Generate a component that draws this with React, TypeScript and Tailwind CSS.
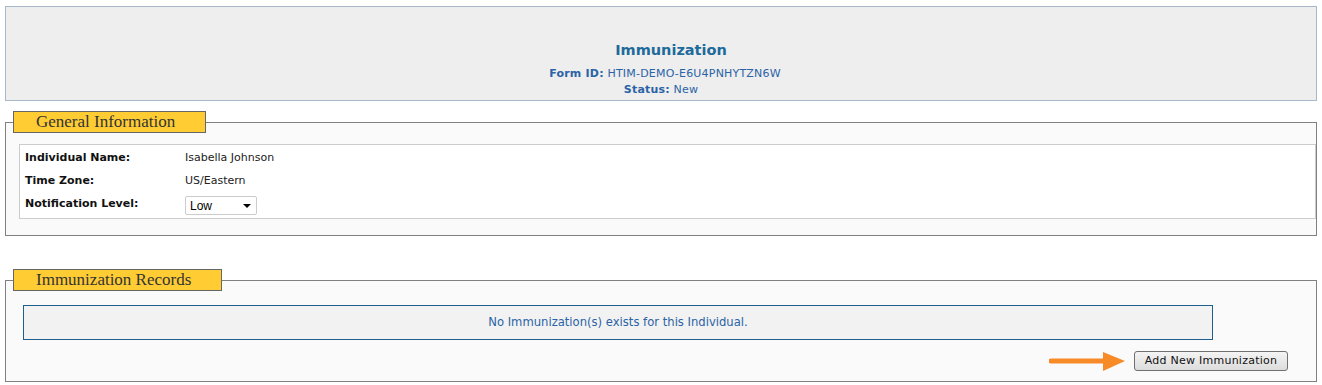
import React from "react";

const verdana = "font-['DejaVu_Sans',Verdana,sans-serif]";

function Legend({ children }: { children: React.ReactNode }) {
  return (
    <legend className="ml-[7px] h-[22px] border border-[#666666] bg-[#ffcc33] pl-[22px] pr-[30px] font-['Liberation_Serif',Georgia,serif] text-[17px] leading-[20px] text-[#333333]">
      {children}
    </legend>
  );
}

function Row({ label, children }: { label: string; children: React.ReactNode }) {
  return (
    <div className="flex h-[23px] items-center">
      <div className="w-[165px] shrink-0 pl-[5px] font-bold text-[#111111]">{label}</div>
      <div className="text-[#222222]">{children}</div>
    </div>
  );
}

export default function App() {
  return (
    <div className={`${verdana} min-h-[385px] bg-white pt-[6px] text-[11px]`}>
      {/* page header */}
      <div className="mx-[5px] h-[95px] border border-[#a7b8c8] bg-[#eeeeee] pt-[33px] text-center">
        <h1 className="pl-[20px] text-[14.5px] font-bold leading-[20px] text-[#1d6a9b]">Immunization</h1>
        <div className="mt-[6px] pl-[8px] leading-[16px] tracking-[0.2px] text-[#2a63a6]">
          <span className="font-bold">Form ID:</span> HTIM-DEMO-E6U4PNHYTZN6W
        </div>
        <div className="leading-[16px] tracking-[0.2px] text-[#2a63a6]">
          <span className="font-bold">Status:</span> New
        </div>
      </div>

      {/* general info */}
      <fieldset className="mx-[5px] mt-[10px] border border-[#808080] bg-[#fafafa]">
        <Legend>General Information</Legend>
        <div className="mb-[16px] ml-[13px] mt-[11px] border border-[#cccccc] bg-white pb-[2px] pt-[2px]">
          <Row label="Individual Name:">Isabella Johnson</Row>
          <Row label="Time Zone:">US/Eastern</Row>
          <Row label="Notification Level:">
            <div className="relative mt-[1px] h-[19px] w-[72px]">
              <select
                defaultValue="Low"
                className="h-full w-full appearance-none rounded-[2px] border border-[#cccccc] bg-white pl-[4px] font-['Liberation_Sans',Arial,sans-serif] text-[12px] text-black outline-none"
              >
                <option>Low</option>
                <option>Medium</option>
                <option>High</option>
              </select>
              <span className="pointer-events-none absolute right-[6px] top-[8px] h-0 w-0 border-x-[4px] border-t-[4px] border-x-transparent border-t-black" />
            </div>
          </Row>
        </div>
      </fieldset>

      {/* records */}
      <fieldset className="mx-[5px] mt-[33px] border border-[#808080] bg-[#fafafa]">
        <Legend>Immunization Records</Legend>
        <div className="ml-[17px] mt-[14px] flex h-[35px] w-[1190px] items-center justify-center border border-[#1f5f8c] bg-[#f2f2f2] pt-[1px] text-[11.6px] text-[#2a63a6]">
          No Immunization(s) exists for this Individual.
        </div>
        <div className="mb-[10px] mr-[28px] mt-[11px] flex items-center justify-end gap-[8px]">
          <svg width="77" height="20" viewBox="0 0 77 20" aria-hidden="true">
            <line x1="2" y1="10" x2="58" y2="10" stroke="#f68b28" strokeWidth="5" strokeLinecap="round" />
            <polygon points="54,1 76,10 54,20" fill="#f68b28" />
          </svg>
          <button className="h-[20px] w-[154px] rounded-[3px] border border-[#707070] bg-gradient-to-b from-[#f4f4f4] to-[#dcdcdc] text-[11px] leading-[18px] tracking-[0.25px] text-[#111111]">
            Add New Immunization
          </button>
        </div>
      </fieldset>
    </div>
  );
}
